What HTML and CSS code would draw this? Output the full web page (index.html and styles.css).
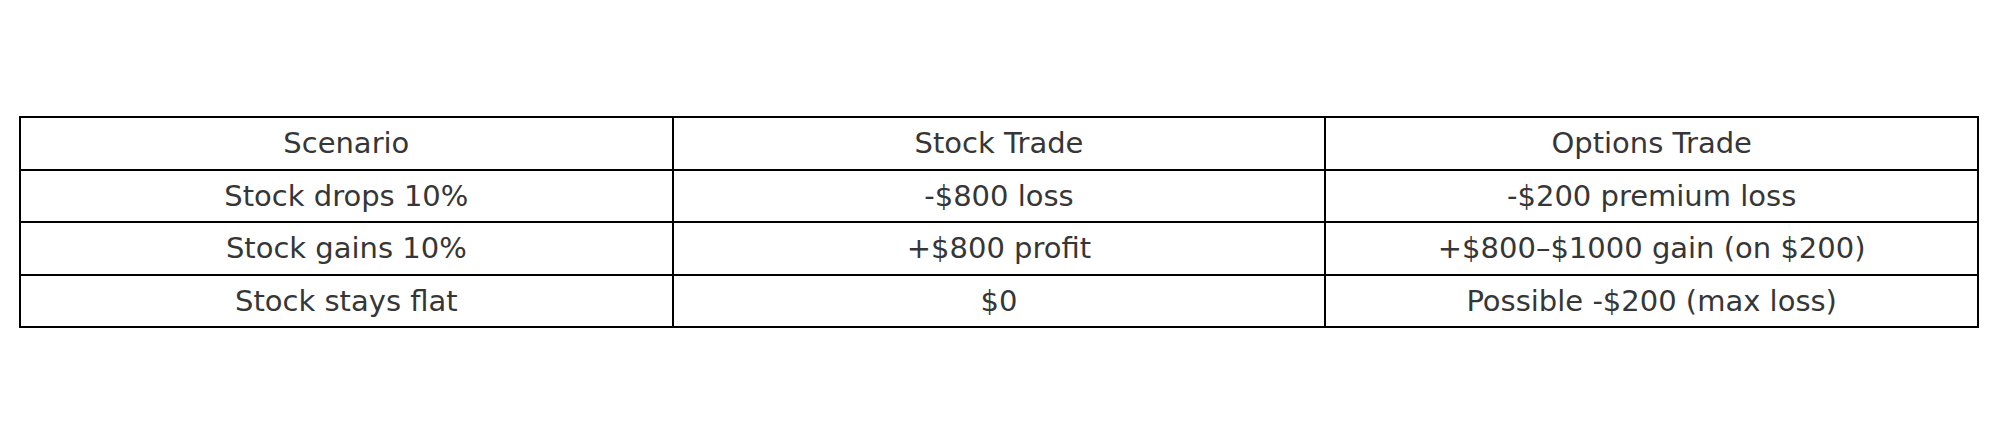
FILE: index.html
```html
<!DOCTYPE html>
<html>
<head>
<meta charset="utf-8">
<link rel="stylesheet" href="styles.css">
</head>
<body>
<div class="page">
<table class="grid">
<tr><td>Scenario</td><td>Stock Trade</td><td>Options Trade</td></tr>
<tr><td>Stock drops 10%</td><td>-$800 loss</td><td>-$200 premium loss</td></tr>
<tr><td>Stock gains 10%</td><td>+$800 profit</td><td>+$800–$1000 gain (on $200)</td></tr>
<tr><td>Stock stays flat</td><td>$0</td><td>Possible -$200 (max loss)</td></tr>
</table>
</div>
</body>
</html>
```
FILE: styles.css
```css
html, body {
  margin: 0;
  padding: 0;
  background: #fff;
}
.page {
  padding: 116px 0 0 19px;
}
.grid {
  border-collapse: collapse;
  width: 1960px;
  table-layout: fixed;
  font-family: "DejaVu Sans", sans-serif;
  font-size: 29px;
  color: #363636;
}
.grid td {
  border: 2px solid #000;
  height: 50.6px;
  padding: 0;
  text-align: center;
  vertical-align: middle;
}
```
